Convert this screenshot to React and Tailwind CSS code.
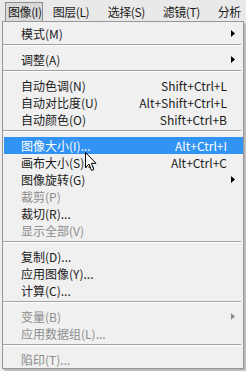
import React from "react";

const items = [
  { label: "模式(M)", arrow: true },
  { sep: true },
  { label: "调整(A)", arrow: true },
  { sep: true },
  { label: "自动色调(N)", shortcut: "Shift+Ctrl+L" },
  { label: "自动对比度(U)", shortcut: "Alt+Shift+Ctrl+L" },
  { label: "自动颜色(O)", shortcut: "Shift+Ctrl+B" },
  { sep: true },
  { label: "图像大小(I)...", shortcut: "Alt+Ctrl+I", active: true },
  { label: "画布大小(S)...", shortcut: "Alt+Ctrl+C" },
  { label: "图像旋转(G)", arrow: true },
  { label: "裁剪(P)", disabled: true },
  { label: "裁切(R)..." },
  { label: "显示全部(V)", disabled: true },
  { sep: true },
  { label: "复制(D)..." },
  { label: "应用图像(Y)..." },
  { label: "计算(C)..." },
  { sep: true },
  { label: "变量(B)", arrow: true, disabled: true },
  { label: "应用数据组(L)...", disabled: true },
  { sep: true },
  { label: "陷印(T)...", disabled: true },
];

const topMenus = ["图层(L)", "选择(S)", "滤镜(T)", "分析"];

const Arrow = ({ color }) => (
  <svg width="4" height="7" viewBox="0 0 4 7" className="absolute right-[8px] top-[5px]">
    <path d="M0 0 L4 3.5 L0 7 Z" fill={color} />
  </svg>
);

const Cursor = () => (
  <svg
    width="13"
    height="20"
    viewBox="0 0 13 20"
    className="absolute left-[85px] top-[152px]"
  >
    <path
      d="M0.5 0.5 L0.5 15.5 L4 12 L6.5 18.5 L8.8 17.5 L6.3 11.3 L11 11.3 Z"
      fill="#fff"
      stroke="#000"
      strokeWidth="1"
      strokeLinejoin="miter"
    />
  </svg>
);

export default function App() {
  return (
    <div className="relative w-[246px] h-[371px] overflow-hidden bg-[#ececec] text-[12px] leading-none text-[#1b1b1b] font-['Noto_Sans_CJK_SC','Noto_Sans',sans-serif]">
      {/* MENU BAR */}
      <div className="h-[21px] pt-[2px] flex items-stretch bg-[#e9e9e9] tracking-[-0.4px]">
        <div className="ml-[5px] w-[46px] border border-b-0 border-[#8e8e8e] bg-[#d9d9d9] pl-[2px] flex items-center whitespace-nowrap">
          图像(I)
        </div>
        <div className="ml-[10px] flex">
          {topMenus.map((m) => (
            <div key={m} className="w-[55px] flex items-center whitespace-nowrap">
              {m}
            </div>
          ))}
        </div>
      </div>

      {/* DROPDOWN */}
      <div className="ml-[2px] w-[242px] border border-[#979797] bg-[#f0f0f0] pt-[3px] shadow-[2px_2px_2px_rgba(0,0,0,0.25)]">
        {items.map((it, i) => {
          if (it.sep) {
            return (
              <div key={i} className="h-[9px] pt-[2px] mr-[2px]">
                <div className="h-px bg-[#a0a0a0]" />
                <div className="h-px bg-white" />
              </div>
            );
          }
          const color = it.active ? "text-white" : it.disabled ? "text-[#8d8d8d]" : "";
          return (
            <div
              key={i}
              className={`relative ml-[1px] h-[17px] pl-[17px] pr-[16px] flex items-center justify-between whitespace-nowrap ${color} ${
                it.active ? "bg-[#3193f3]" : ""
              }`}
            >
              <span>{it.label}</span>
              {it.shortcut && <span>{it.shortcut}</span>}
              {it.arrow && <Arrow color={it.disabled ? "#8d8d8d" : "#000"} />}
            </div>
          );
        })}
      </div>

      <Cursor />
    </div>
  );
}
